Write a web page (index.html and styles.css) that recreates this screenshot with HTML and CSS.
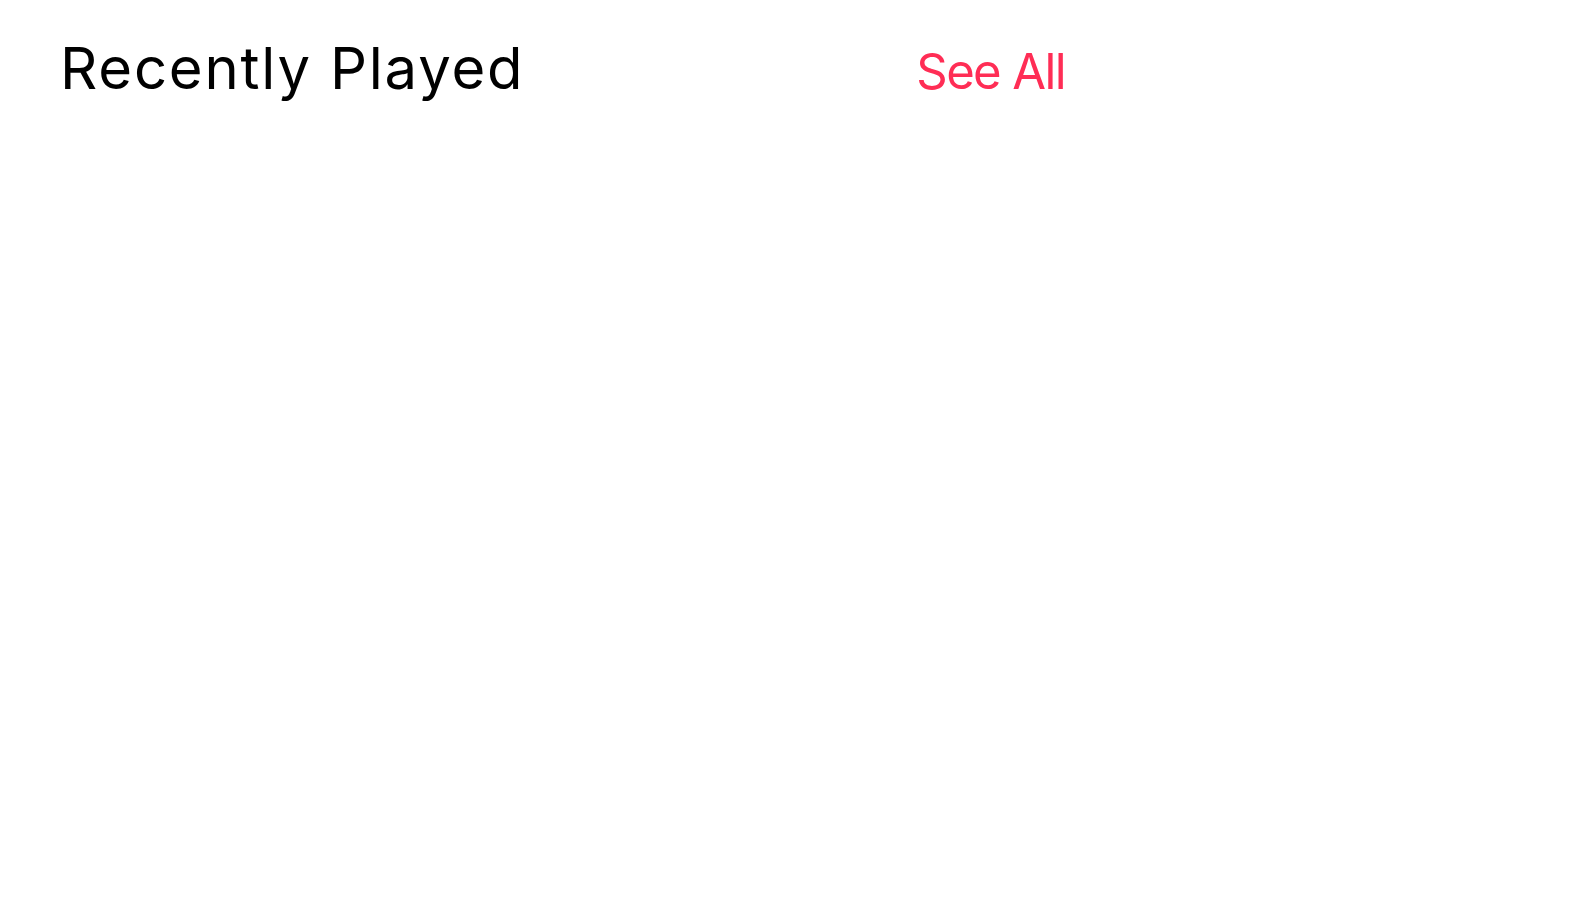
FILE: index.html
```html
<!DOCTYPE html>
<html>
<head>
<meta charset="utf-8">
<link rel="stylesheet" href="styles.css">
</head>
<body>
<div class="page">
  <header class="header">
    <h1 class="title">Recently Played</h1>
    <a class="see-all">See All</a>
  </header>
</div>
</body>
</html>
```
FILE: styles.css
```css
html, body {
  margin: 0;
  padding: 0;
  background: #ffffff;
}
.page {
  width: 1584px;
  height: 906px;
}
.header {
  display: flex;
  align-items: baseline;
  justify-content: space-between;
  padding: 32px 0 0 60px;
  width: 1005px;
}
.title {
  margin: 0;
  font-family: Inter, "Noto Sans", sans-serif;
  font-weight: 400;
  font-size: 58px;
  line-height: 72px;
  color: #000000;
  letter-spacing: 1.8px;
}
.see-all {
  font-family: Inter, "Noto Sans", sans-serif;
  font-weight: 400;
  font-size: 49px;
  color: #ff2d55;
  letter-spacing: -1.6px;
}
```
